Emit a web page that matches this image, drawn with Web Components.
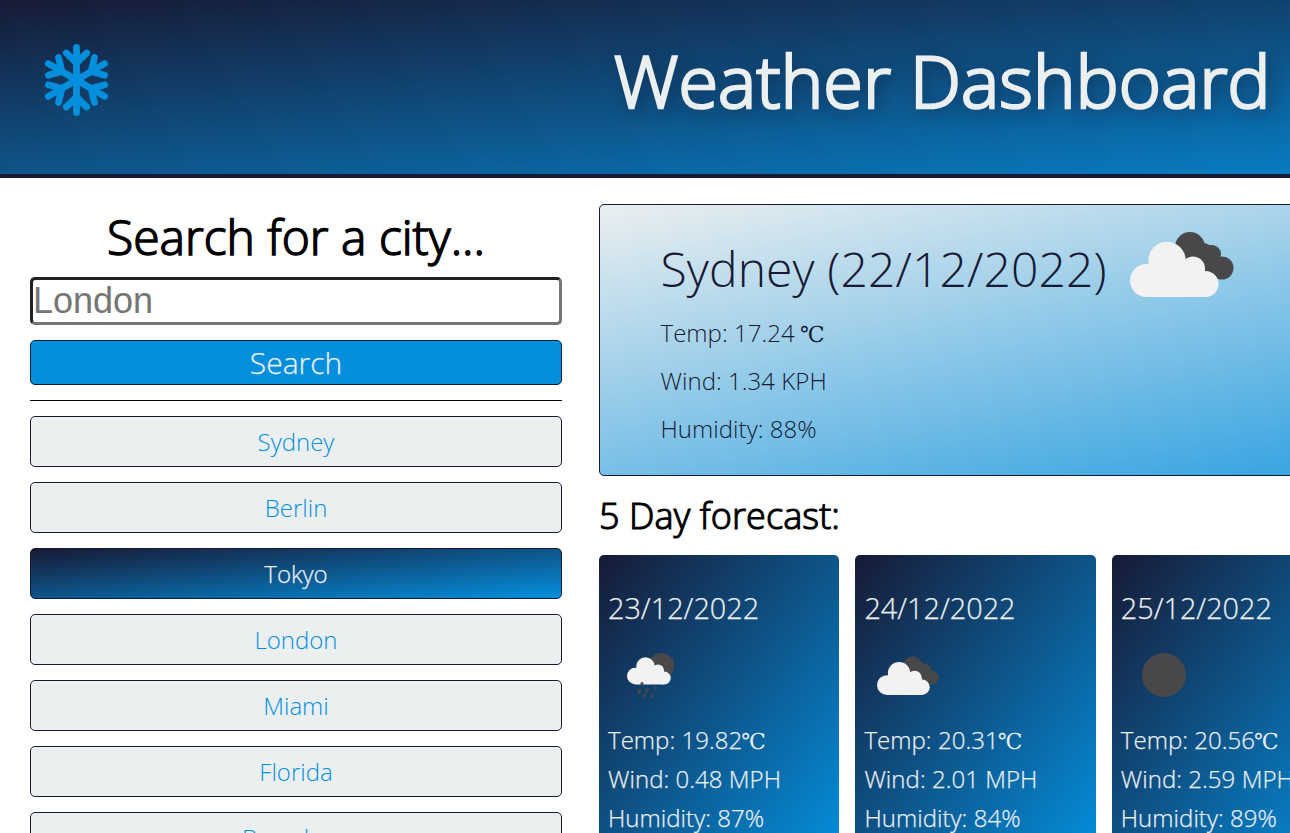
<!DOCTYPE html>
<html lang="en">
<head>
<meta charset="utf-8">
<title>Weather Dashboard</title>
<style>
html,body{margin:0;height:100%;overflow:hidden;background:#fff}
body{font-family:"Open Sans","Liberation Sans",sans-serif;font-weight:300;--dark:#171a35;--blue:#048fdd;--pale:#ebeff0}
</style>
</head>
<body>
<weather-app></weather-app>
<script>
const define = (name, html) => customElements.define(name, class extends HTMLElement {
  constructor() {
    super();
    const t = document.createElement('template');
    t.innerHTML = typeof html === 'function' ? html(this) : html;
    this.attachShadow({ mode: 'open' }).appendChild(t.content.cloneNode(true));
  }
});

define('snow-flake', `
<style>:host{display:block;width:65px;height:72px}svg{display:block}</style>
<svg width="65" height="72" viewBox="-32.5 -36 65 72" fill="none" stroke="#048fdd" stroke-width="6.8" stroke-linecap="round" stroke-linejoin="round">
<defs><g id="arm"><path d="M0 0V-32.6M-10.2 -27L0 -17L10.2 -27"/></g></defs>
<use href="#arm"/><use href="#arm" transform="rotate(180)"/>
<path d="M0 0L-28.2 -16.4M-18 -22.5L-14.5 -8.5L-28.2 -4.8"/>
<path d="M0 0L28.2 -16.4M18 -22.5L14.5 -8.5L28.2 -4.8"/>
<path d="M0 0L-28.2 16.4M-18 22.5L-14.5 8.5L-28.2 4.8"/>
<path d="M0 0L28.2 16.4M18 22.5L14.5 8.5L28.2 4.8"/>
</svg>`);

const darkCloud = '<g fill="#48484a"><circle cx="60" cy="15" r="15"/><circle cx="82" cy="22" r="9"/><circle cx="92" cy="36" r="11.5"/><path d="M50 20L60 5L82 14L92 47L70 45Z"/></g>';
const paleCloud = '<g fill="#f2f2f2"><circle cx="16.5" cy="48.5" r="16.5"/><circle cx="37" cy="28.5" r="18.7"/><circle cx="63" cy="36.5" r="12"/><circle cx="75.5" cy="52" r="13"/><path d="M16.5 36H75V65H16.5Z"/></g>';
const pics = {
  clouds: '<svg viewBox="0 0 104 65">' + darkCloud + paleCloud + '</svg>',
  moon: '<svg viewBox="0 0 44 44"><circle cx="22" cy="22" r="22" fill="#48484a"/></svg>',
  rain: '<svg viewBox="0 0 48 46"><circle cx="34.5" cy="13" r="13" fill="#48484a"/><g fill="#f2f2f2"><circle cx="8.2" cy="23" r="8.2"/><circle cx="18.5" cy="13.5" r="9.3"/><circle cx="31" cy="17.5" r="6"/><circle cx="37.3" cy="25" r="6.5"/><path d="M8 17H37V31.5H8Z"/></g><g stroke="#48484a" stroke-width="3" stroke-linecap="round"><path d="M15 30.5v.7M12.500 37.500l-1 2M20.500 36l-1.200 2M28.500 34.800v.5M17.800 42.500v.4M25.600 42l-.5 1.500"/></g></svg>'
};
define('weather-icon', el => `<style>:host{display:block}svg{display:block;width:100%;height:100%}</style>${pics[el.getAttribute('kind')]}`);

define('app-header', `
<style>
:host{display:flex;align-items:flex-start;box-sizing:border-box;height:178px;padding:44px 0 0 44px;border-bottom:4px solid var(--dark);background:linear-gradient(to bottom right,var(--dark),var(--blue))}
h1{margin:-14px 0 0 505px;font-size:72px;line-height:100px;font-weight:300;letter-spacing:.16px;-webkit-text-stroke:2.7px var(--pale);color:var(--pale);text-shadow:4px 4px 16px rgba(23,25,53,.8);white-space:nowrap}
</style>
<snow-flake></snow-flake><h1>Weather Dashboard</h1>`);

define('city-button', `
<style>
:host{display:flex;align-items:center;justify-content:center;box-sizing:border-box;height:51px;border:1px solid var(--dark);border-radius:5px;background:var(--pale);color:var(--blue);font-size:24px;line-height:33px}
:host([active]){background:linear-gradient(to bottom right,var(--dark),var(--blue));color:var(--pale);-webkit-text-stroke:.25px}
</style><slot></slot>`);

define('city-search', `
<style>
:host{display:flex;flex-direction:column;width:532px}
h2{margin:0;height:73px;font-size:48px;line-height:66px;font-weight:300;-webkit-text-stroke:1.5px #000;text-align:center;color:#000}
input{box-sizing:border-box;width:100%;height:48px;margin:0;padding:1px 0;border:3px solid;border-color:#212121 #767676 #767676 #212121;border-radius:5px;background:#fff;font:400 36px "Liberation Sans",sans-serif;outline:0}
input::placeholder{color:#757575}
.go{display:flex;align-items:center;justify-content:center;box-sizing:border-box;height:45px;margin-top:15px;border:1px solid var(--dark);border-radius:5px;background:var(--blue);color:var(--pale);font-family:inherit;font-size:30px;font-weight:300;-webkit-text-stroke:.25px;padding:0;line-height:42px}
hr{width:100%;height:1px;border:0;background:#000;margin:15px 0}
nav{display:flex;flex-direction:column;gap:15px}
</style>
<h2>Search for a city...</h2>
<input placeholder="London">
<button class="go">Search</button>
<hr>
<nav><slot></slot></nav>`);

define('current-weather', `
<style>
:host{display:block;box-sizing:border-box;height:272px;padding:25px 60.5px;border:1px solid var(--dark);border-radius:5px;background:linear-gradient(to bottom right,var(--pale),var(--blue));color:var(--dark)}
.top{display:flex;align-items:flex-start;gap:23px}
h2{margin:6px 0 0;font-size:48px;line-height:66px;font-weight:300;letter-spacing:.12px}
weather-icon{width:104px;height:65px;margin-top:2px}
.data{display:flex;flex-direction:column;gap:15px;margin-top:14px;font-size:24px;line-height:33px;letter-spacing:.05px}
</style>
<div class="top"><h2><slot name="title"></slot></h2><weather-icon kind="clouds"></weather-icon></div>
<div class="data"><slot></slot></div>`);

define('forecast-card', el => `
<style>
:host{display:block;box-sizing:border-box;height:300px;padding:32px 9px;border-radius:5px;background:linear-gradient(to bottom right,var(--dark),var(--blue));color:var(--pale);white-space:nowrap;-webkit-text-stroke:.25px}
h3{margin:0;font-size:28.8px;line-height:42px;font-weight:300}
.pic{height:93px;padding:23px 0 0 ${el.getAttribute('inset')}px;box-sizing:border-box}
.data{display:flex;flex-direction:column;gap:6px;margin-top:1px;font-size:24px;line-height:33px;letter-spacing:.05px}
weather-icon{width:${el.getAttribute('w')}px;height:${el.getAttribute('h')}px;margin-top:${el.getAttribute('drop')}px}
</style>
<h3>${el.getAttribute('date')}</h3>
<div class="pic"><weather-icon kind="${el.getAttribute('kind')}"></weather-icon></div>
<div class="data"><slot></slot></div>`);

define('weather-app', `
<style>
:host{display:block;width:1895px}
.body{display:flex;gap:37px;padding:26px 30px 0}
main{width:1266px}
h2{margin:6px 0;font-size:36px;line-height:67px;font-weight:300;letter-spacing:.1px;-webkit-text-stroke:1.125px #000;color:#000}
.row{display:grid;grid-template-columns:repeat(5,1fr);gap:16px}
i{font:400 22px/0 "DejaVu Serif",serif;margin-left:-1px;-webkit-text-stroke:0}
</style>
<app-header></app-header>
<div class="body">
<city-search><city-button>Sydney</city-button><city-button>Berlin</city-button><city-button active>Tokyo</city-button><city-button>London</city-button><city-button>Miami</city-button><city-button>Florida</city-button><city-button>Barcelona</city-button></city-search>
<main>
<current-weather><span slot="title">Sydney (22/12/2022)</span><div>Temp: 17.24 <i>℃</i></div><div>Wind: 1.34 KPH</div><div>Humidity: 88%</div></current-weather>
<h2>5 Day forecast:</h2>
<div class="row">
<forecast-card date="23/12/2022" kind="rain" inset="19" w="48" h="46" drop="0.5"><div>Temp: 19.82<i>℃</i></div><div>Wind: 0.48 MPH</div><div>Humidity: 87%</div></forecast-card>
<forecast-card date="24/12/2022" kind="clouds" inset="13" w="62" h="39" drop="4"><div>Temp: 20.31<i>℃</i></div><div>Wind: 2.01 MPH</div><div>Humidity: 84%</div></forecast-card>
<forecast-card date="25/12/2022" kind="moon" inset="21.5" w="44" h="44" drop="1"><div>Temp: 20.56<i>℃</i></div><div>Wind: 2.59 MPH</div><div>Humidity: 89%</div></forecast-card>
</div>
</main>
</div>`);
</script>
</body>
</html>
